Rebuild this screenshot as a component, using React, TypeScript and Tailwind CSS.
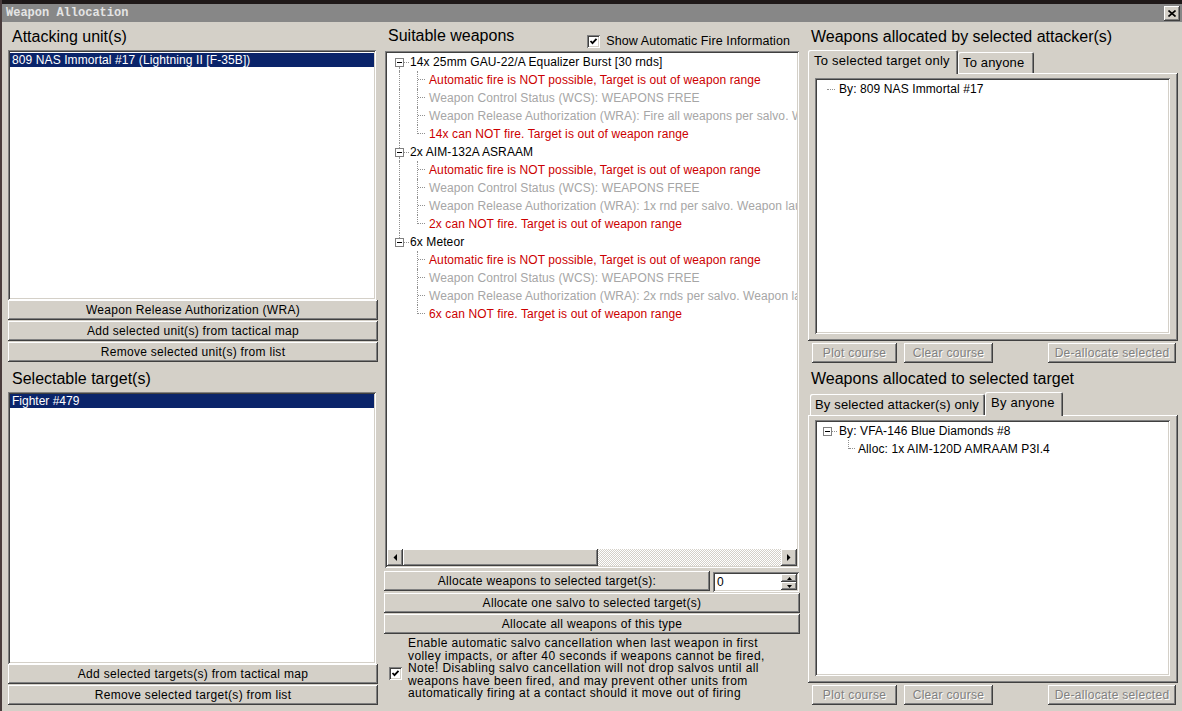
import React from 'react';

const sunken =
  'bg-white shadow-[inset_1px_1px_0_#808080,inset_-1px_-1px_0_#ffffff,inset_2px_2px_0_#404040,inset_-2px_-2px_0_#d4d0c8]';
const raised =
  'bg-[#d4d0c8] shadow-[inset_-1px_-1px_0_#404040,inset_1px_1px_0_#ffffff,inset_-2px_-2px_0_#808080,inset_2px_2px_0_#d4d0c8]';

type BtnProps = { children: React.ReactNode; disabled?: boolean; className?: string };

function Button({ children, disabled, className = '' }: BtnProps) {
  return (
    <div
      className={`${raised} flex h-[20px] shrink-0 items-center justify-center whitespace-nowrap text-[12px] tracking-[0.3px] ${
        disabled ? 'text-[#808080] [text-shadow:1px_1px_0_#ffffff]' : 'text-black'
      } ${className}`}
    >
      {children}
    </div>
  );
}

function Check() {
  return (
    <div className={`${sunken} flex h-[13px] w-[13px] shrink-0 items-center justify-center`}>
      <svg width="9" height="9" viewBox="0 0 9 9">
        <polyline points="1.5,4 3.5,6.2 7.5,1.8" fill="none" stroke="#000" strokeWidth="1.8" />
      </svg>
    </div>
  );
}

function MinusBox() {
  return (
    <div className="flex h-[9px] w-[9px] shrink-0 items-center justify-center border border-[#808080] bg-white">
      <div className="h-px w-[5px] bg-black" />
    </div>
  );
}

function Tab({ label, active, className = '' }: { label: string; active?: boolean; className?: string }) {
  if (active) {
    return (
      <div
        className={`relative z-10 -mb-px flex h-[24px] items-center whitespace-nowrap rounded-t-[2px] bg-[#d4d0c8] px-[6px] pb-[2px] text-[13px] tracking-[0.25px] shadow-[inset_1px_1px_0_#ffffff,inset_-1px_0_0_#404040,inset_-2px_0_0_#808080] ${className}`}
      >
        {label}
      </div>
    );
  }
  return (
    <div
      className={`flex h-[21px] items-center whitespace-nowrap rounded-t-[2px] bg-[#d4d0c8] px-[5px] text-[13px] tracking-[0.15px] shadow-[inset_1px_1px_0_#ffffff,inset_-1px_0_0_#404040,inset_-2px_0_0_#808080] ${className}`}
    >
      {label}
    </div>
  );
}

const weapons = [
  { name: '14x 25mm GAU-22/A Equalizer Burst [30 rnds]', count: '14x', wra: 'Fire all weapons per salvo. Weapon launch at max range' },
  { name: '2x AIM-132A ASRAAM', count: '2x', wra: '1x rnd per salvo. Weapon launch at max range' },
  { name: '6x Meteor', count: '6x', wra: '2x rnds per salvo. Weapon launch at max range' },
];

const dot = 'border-dotted border-[#909090]';

function ChildRow({ text, color, last, rootLine }: { text: string; color: string; last?: boolean; rootLine?: boolean }) {
  return (
    <div className="flex h-[18px] items-start">
      <div className="w-[12px] shrink-0" />
      <div className={`h-full w-px shrink-0 ${rootLine ? `border-l ${dot}` : ''}`} />
      <div className="w-[17px] shrink-0" />
      <div className={`w-px shrink-0 border-l ${dot} ${last ? 'h-[9px]' : 'h-full'}`} />
      <div className={`h-[9px] w-[7px] shrink-0 border-b ${dot}`} />
      <span className={`ml-[4px] self-center whitespace-nowrap tracking-[0.1px] ${color}`}>{text}</span>
    </div>
  );
}

function WeaponTree() {
  return (
    <div className="text-[12px] leading-[18px]">
      {weapons.map((w, i) => {
        const first = i === 0;
        const lastRoot = i === weapons.length - 1;
        const rows = [
          { t: 'Automatic fire is NOT possible, Target is out of weapon range', c: 'text-[#cc0000]' },
          { t: 'Weapon Control Status (WCS): WEAPONS FREE', c: 'text-[#a6a6a6]' },
          { t: `Weapon Release Authorization (WRA): ${w.wra}`, c: 'text-[#a6a6a6]' },
          { t: `${w.count} can NOT fire. Target is out of weapon range`, c: 'text-[#cc0000]' },
        ];
        return (
          <div key={w.name}>
            <div className="flex h-[18px] items-center">
              <div className="w-[8px] shrink-0" />
              <div className="flex h-full w-[9px] shrink-0 flex-col items-center">
                <div className={`w-px flex-1 ${first ? '' : `border-l ${dot}`}`} />
                <MinusBox />
                <div className={`w-px flex-1 ${lastRoot ? '' : `border-l ${dot}`}`} />
              </div>
              <div className={`w-[5px] shrink-0 border-t ${dot}`} />
              <span className="ml-px whitespace-nowrap tracking-[0.1px] text-black">{w.name}</span>
            </div>
            {rows.map((r, j) => (
              <ChildRow key={j} text={r.t} color={r.c} last={j === rows.length - 1} rootLine={!lastRoot} />
            ))}
          </div>
        );
      })}
    </div>
  );
}

function Arrow({ dir }: { dir: 'left' | 'right' }) {
  return (
    <div className={`${raised} flex h-[17px] w-[16px] shrink-0 items-center justify-center`}>
      <svg width="4" height="7" viewBox="0 0 4 7">
        {dir === 'left' ? <polygon points="4,0 4,7 0.5,3.5" fill="#000" /> : <polygon points="0,0 0,7 3.5,3.5" fill="#000" />}
      </svg>
    </div>
  );
}

export default function App() {
  return (
    <div className="h-[711px] w-[1182px] overflow-hidden border-l-2 border-[#4a3c3c] bg-[#d4d0c8] font-['Liberation_Sans',Arial,sans-serif] text-black">
      {/* title bar */}
      <div className="h-[4px] bg-[#1e1818]" />
      <div className="flex h-[18px] items-center justify-between bg-[#878787] pl-[4px] pr-[2px]">
        <span className="font-['Liberation_Mono',monospace] text-[12px] font-bold text-[#e4e4e4]">Weapon Allocation</span>
        <div className={`${raised} flex h-[15px] w-[16px] items-center justify-center`}>
          <svg width="8" height="7" viewBox="0 0 8 7">
            <path d="M0.5 0.5 L7.5 6.5 M7.5 0.5 L0.5 6.5" stroke="#000" strokeWidth="1.6" />
          </svg>
        </div>
      </div>

      <div className="flex pl-[6px] pt-[2px]">
        {/* left column */}
        <div className="flex w-[370px] flex-col">
          <div className="flex h-[26px] items-center pl-[4px] text-[16px]">Attacking unit(s)</div>
          <div className={`${sunken} mr-[2px] h-[250px] px-[2px] pt-[3px]`}>
            <div className="flex h-[14px] items-center bg-[#0a246a] pl-[2px] text-[12px] tracking-[0.1px] text-white">
              809 NAS Immortal #17 (Lightning II [F-35B])
            </div>
          </div>
          <div className="flex flex-col gap-px">
            <Button>Weapon Release Authorization (WRA)</Button>
            <Button>Add selected unit(s) from tactical map</Button>
            <Button>Remove selected unit(s) from list</Button>
          </div>
          <div className="flex h-[30px] items-center pl-[4px] pt-[3px] text-[16px]">Selectable target(s)</div>
          <div className={`${sunken} mr-[2px] h-[272px] px-[2px] pt-[2px]`}>
            <div className="flex h-[14px] items-center bg-[#0a246a] pl-[2px] text-[12px] text-white">Fighter #479</div>
          </div>
          <div className="flex flex-col gap-px">
            <Button>Add selected targets(s) from tactical map</Button>
            <Button>Remove selected target(s) from list</Button>
          </div>
        </div>

        {/* middle column */}
        <div className="ml-[6px] flex w-[416px] flex-col">
          <div className="flex h-[27px] items-start justify-between pl-[4px] pr-[10px]">
            <span className="mt-[3px] text-[16px] leading-[18px]">Suitable weapons</span>
            <div className="mt-[8px] flex items-center gap-[6px]">
              <Check />
              <span className="text-[12.5px] tracking-[0.1px]">Show Automatic Fire Information</span>
            </div>
          </div>
          <div className={`${sunken} ml-px flex h-[517px] w-[414px] flex-col p-[2px]`}>
            <div className="flex-1 overflow-hidden">
              <WeaponTree />
            </div>
            <div className="flex h-[17px]">
              <Arrow dir="left" />
              <div className={`${raised} h-full w-[195px]`} />
              <div className="h-full flex-1 bg-[repeating-conic-gradient(#ffffff_0%_25%,#d4d0c8_0%_50%)] bg-[length:2px_2px]" />
              <Arrow dir="right" />
            </div>
          </div>
          <div className="mt-[3px] flex">
            <Button className="w-[326px]">Allocate weapons to selected target(s):</Button>
            <div className={`${sunken} ml-[3px] mt-px flex h-[20px] w-[86px] items-stretch p-[2px]`}>
              <span className="flex-1 pl-[2px] text-[12px] leading-[16px]">0</span>
              <div className="flex w-[16px] flex-col">
                <div className={`${raised} flex flex-1 items-center justify-center`}>
                  <svg width="5" height="3" viewBox="0 0 5 3">
                    <polygon points="0,3 5,3 2.5,0" fill="#000" />
                  </svg>
                </div>
                <div className={`${raised} flex flex-1 items-center justify-center`}>
                  <svg width="5" height="3" viewBox="0 0 5 3">
                    <polygon points="0,0 5,0 2.5,3" fill="#000" />
                  </svg>
                </div>
              </div>
            </div>
          </div>
          <div className="mt-px flex flex-col gap-px">
            <Button>Allocate one salvo to selected target(s)</Button>
            <Button>Allocate all weapons of this type</Button>
          </div>
          <div className="mt-[3px] flex items-center pl-[5px]">
            <div className="mt-[10px]">
              <Check />
            </div>
            <div className="ml-[6px] whitespace-nowrap text-[12px] leading-[12.5px] tracking-[0.4px]">
              Enable automatic salvo cancellation when last weapon in first
              <br />
              volley impacts, or after 40 seconds if weapons cannot be fired,
              <br />
              Note! Disabling salvo cancellation will not drop salvos until all
              <br />
              weapons have been fired, and may prevent other units from
              <br />
              automatically firing at a contact should it move out of firing
            </div>
          </div>
        </div>

        {/* right column */}
        <div className="ml-[8px] flex w-[370px] flex-col">
          <div className="flex h-[26px] items-center pl-[3px] text-[16px]">Weapons allocated by selected attacker(s)</div>
          <div className="flex h-[23px] items-end">
            <Tab label="To selected target only" active className="w-[150px]" />
            <Tab label="To anyone" className="w-[76px]" />
          </div>
          <div className={`${raised} h-[268px] pb-[7px] pl-[7px] pr-[8px] pt-[5px]`}>
            <div className={`${sunken} h-full pt-[2px] text-[12px]`}>
              <div className="flex h-[18px] items-center pl-[12px]">
                <div className={`w-[8px] border-t ${dot}`} />
                <span className="ml-[4px] tracking-[0.1px]">By: 809 NAS Immortal #17</span>
              </div>
            </div>
          </div>
          <div className="mt-[2px] flex">
            <Button disabled className="ml-[4px] w-[85px]">Plot course</Button>
            <Button disabled className="ml-[7px] w-[89px]">Clear course</Button>
            <Button disabled className="ml-auto mr-[2px] w-[128px]">De-allocate selected</Button>
          </div>
          <div className="flex h-[30px] items-center pl-[3px] pt-[2px] text-[16px]">Weapons allocated to selected target</div>
          <div className="flex h-[22px] items-end">
            <Tab label="By selected attacker(s) only" className="ml-[2px] w-[175px]" />
            <Tab label="By anyone" active className="w-[78px]" />
          </div>
          <div className={`${raised} h-[268px] pb-[7px] pl-[7px] pr-[8px] pt-[5px]`}>
            <div className={`${sunken} h-full pt-[2px] text-[12px]`}>
              <div className="flex h-[18px] items-center pl-[8px]">
                <MinusBox />
                <div className={`w-[5px] border-t ${dot}`} />
                <span className="ml-[2px] tracking-[0.1px]">By: VFA-146 Blue Diamonds #8</span>
              </div>
              <div className="flex h-[18px] items-start pl-[33px]">
                <div className={`h-[9px] w-px border-l ${dot}`} />
                <div className={`h-[9px] w-[6px] border-b ${dot}`} />
                <span className="ml-[3px] self-center tracking-[0.1px]">Alloc: 1x AIM-120D AMRAAM P3I.4</span>
              </div>
            </div>
          </div>
          <div className="mt-[2px] flex">
            <Button disabled className="ml-[4px] w-[85px]">Plot course</Button>
            <Button disabled className="ml-[7px] w-[89px]">Clear course</Button>
            <Button disabled className="ml-auto mr-[2px] w-[128px]">De-allocate selected</Button>
          </div>
        </div>
      </div>
    </div>
  );
}
